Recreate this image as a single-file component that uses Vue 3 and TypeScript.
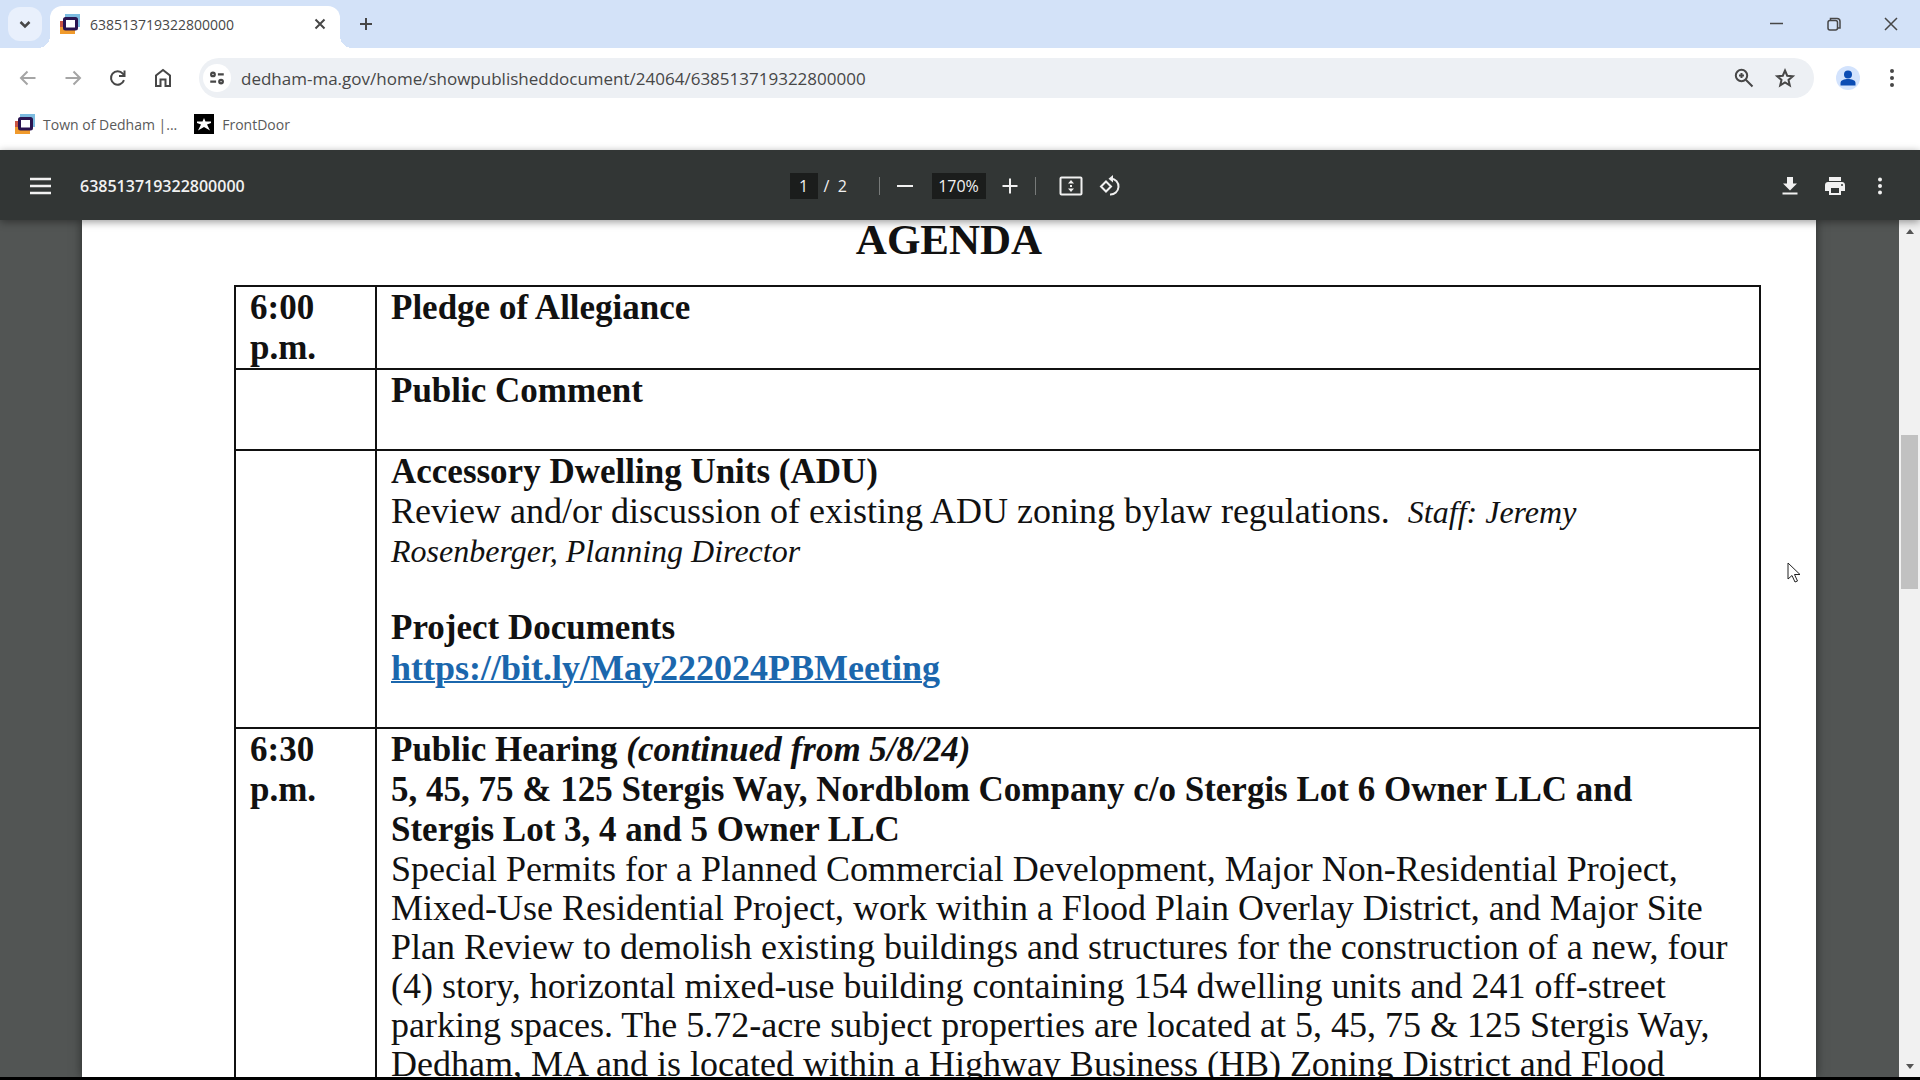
<script setup lang="ts">
import { ref } from 'vue'

const documentId = '638513719322800000'
const address = ref(`dedham-ma.gov/home/showpublisheddocument/24064/${documentId}`)
const pageNumber = ref('1')
const zoomLevel = ref('170%')
</script>

<template>
  <div class="browser">
    <header class="tab-strip">
      <button class="tab-search" aria-label="Search tabs">
        <svg width="24" height="24" viewBox="0 0 24 24"><path d="M7.500 10l4.500 4.500 4.500-4.500" class="line bold" /></svg>
      </button>
      <div class="tab">
        <svg class="favicon" width="20" height="20" viewBox="0 0 20 20">
          <path d="M5 0h15v13H5z" fill="#7cbbe0" />
          <path d="M0 8h15v12H0z" fill="#f09a2c" />
          <path d="M0 7h5v6H0z" fill="#c95343" />
          <rect x="4.500" y="4.500" width="12" height="10.500" rx="1" fill="#fff" stroke="#2a1450" stroke-width="3" />
        </svg>
        <span class="tab-title">{{ documentId }}</span>
        <button class="icon-button" aria-label="Close tab">
          <svg width="20" height="20" viewBox="0 0 20 20"><path d="M5.500 5.500l9 9M14.500 5.500l-9 9" class="line" /></svg>
        </button>
      </div>
      <button class="icon-button new-tab" aria-label="New tab">
        <svg width="20" height="20" viewBox="0 0 20 20"><path d="M10 4v12M4 10h12" class="line" /></svg>
      </button>
      <div class="window-controls">
        <button class="icon-button" aria-label="Minimize">
          <svg width="20" height="20" viewBox="0 0 20 20"><path d="M3 9.500h13" class="line thin" /></svg>
        </button>
        <button class="icon-button" aria-label="Restore">
          <svg width="20" height="20" viewBox="0 0 20 20">
            <rect x="4" y="6.500" width="9.500" height="9.500" rx="2" class="line thin" />
            <path d="M6.500 6V4.500h6.500a3 3 0 0 1 3 3v6.500h-2" class="line thin" />
          </svg>
        </button>
        <button class="icon-button" aria-label="Close window">
          <svg width="20" height="20" viewBox="0 0 20 20"><path d="M4 4l12 12M16 4L4 16" class="line thin" /></svg>
        </button>
      </div>
    </header>

    <div class="toolbar">
      <nav class="nav-buttons" aria-label="Navigation">
        <button class="icon-button faded" aria-label="Back">
          <svg width="24" height="24" viewBox="0 0 24 24"><path d="M19.500 12H5M11.500 5.500L5 12l6.500 6.500" class="line" /></svg>
        </button>
        <button class="icon-button faded" aria-label="Forward">
          <svg width="24" height="24" viewBox="0 0 24 24"><path d="M4.500 12H19M12.500 5.500L19 12l-6.500 6.500" class="line" /></svg>
        </button>
        <button class="icon-button" aria-label="Reload">
          <svg width="24" height="24" viewBox="0 0 24 24">
            <path d="M18 14.200A6.700 6.700 0 1 1 16.800 7.600L18 9" class="line" />
            <path d="M18.500 4.500v5.500h-5.500" class="line" />
          </svg>
        </button>
        <button class="icon-button" aria-label="Home">
          <svg width="24" height="24" viewBox="0 0 24 24"><path d="M5 20V9.500l7-5.500 7 5.500V20h-4.500v-6.500h-5V20z" class="line" /></svg>
        </button>
      </nav>
      <div class="address-bar">
        <button class="site-info" aria-label="View site information">
          <svg width="18" height="18" viewBox="0 0 20 20">
            <circle cx="5.500" cy="6" r="2" class="line bold" />
            <path d="M11 6h6.500M2.500 14H9" class="line bold" />
            <circle cx="14.500" cy="14" r="2" class="line bold" />
          </svg>
        </button>
        <input v-model="address" class="url" type="text" aria-label="Address" spellcheck="false" />
        <button class="icon-button" aria-label="Zoom">
          <svg width="24" height="24" viewBox="0 0 24 24">
            <circle cx="9.500" cy="9.500" r="5.700" class="line" />
            <path d="M13.800 13.800l6.700 6.700M9.500 7v5M7 9.500h5" class="line" />
          </svg>
        </button>
        <button class="icon-button" aria-label="Bookmark this tab">
          <svg width="24" height="24" viewBox="0 0 24 24">
            <path d="M12 4.500l2.200 5.200 5.600.500-4.300 3.700 1.300 5.500-4.800-2.900-4.800 2.900 1.300-5.500-4.300-3.700 5.600-.500z" class="line" />
          </svg>
        </button>
      </div>
      <button class="profile" aria-label="Profile">
        <svg width="24" height="24" viewBox="0 0 24 24">
          <circle cx="12" cy="12" r="12" fill="#d3e3fd" />
          <circle cx="12" cy="8.500" r="4" fill="#0b4cb4" />
          <path d="M4.500 19.500v-2.500c0-3 4-4 7.500-4s7.500 1 7.500 4v2.500z" fill="#0b4cb4" />
        </svg>
      </button>
      <button class="icon-button" aria-label="Browser menu">
        <svg width="24" height="24" viewBox="0 0 24 24" fill="#474747">
          <circle cx="12" cy="5" r="2" /><circle cx="12" cy="12" r="2" /><circle cx="12" cy="19" r="2" />
        </svg>
      </button>
    </div>

    <nav class="bookmarks" aria-label="Bookmarks">
      <a href="#">
        <svg width="20" height="20" viewBox="0 0 20 20">
          <path d="M5 0h15v13H5z" fill="#7cbbe0" />
          <path d="M0 8h15v12H0z" fill="#f09a2c" />
          <path d="M0 7h5v6H0z" fill="#c95343" />
          <rect x="4.500" y="4.500" width="12" height="10.500" rx="1" fill="#fff" stroke="#2a1450" stroke-width="3" />
        </svg>
        Town of Dedham |...
      </a>
      <a href="#">
        <svg width="20" height="20" viewBox="0 0 20 20">
          <path d="M0 0h20v20H0z" />
          <path d="M10 4l1.500 3.500h5.500v1.500l-4 1.500 3 6-6-3.500-6 3.500 3-6-4-1.500V7.500h5.500z" fill="#fff" />
        </svg>
        FrontDoor
      </a>
    </nav>

    <div class="pdf-toolbar">
      <div class="pdf-start">
        <button class="icon-button" aria-label="Menu">
          <svg width="22" height="20" viewBox="0 0 22 20"><path d="M1 3h21M1 10h21M1 17h21" class="line bold" /></svg>
        </button>
        <span class="pdf-title">{{ documentId }}</span>
      </div>
      <div class="pdf-center">
        <input v-model="pageNumber" class="page-input" type="text" aria-label="Page number" />
        <span class="page-count">/&nbsp; 2</span>
        <i class="divider"></i>
        <button class="icon-button" aria-label="Zoom out">
          <svg width="24" height="24" viewBox="0 0 24 24"><path d="M4 12h16" class="line" /></svg>
        </button>
        <input v-model="zoomLevel" class="zoom-input" type="text" aria-label="Zoom level" />
        <button class="icon-button" aria-label="Zoom in">
          <svg width="24" height="24" viewBox="0 0 24 24"><path d="M12 4.500v15M4.500 12h15" class="line" /></svg>
        </button>
        <i class="divider"></i>
        <button class="icon-button fit" aria-label="Fit to page">
          <svg width="24" height="24" viewBox="0 0 24 24" fill="currentColor">
            <rect x="1.500" y="3.500" width="21" height="17" rx="1" class="line" />
            <path d="M12 6l3 3.500H9zM12 18l3-3.500H9zM11 11h2v2h-2z" />
          </svg>
        </button>
        <button class="icon-button" aria-label="Rotate counterclockwise">
          <svg width="24" height="24" viewBox="0 0 24 24">
            <path d="M7 7.500l5 5-5 5-5-5z" class="line" />
            <path d="M12 4.500a8 8 0 1 1-1 16" class="line" />
            <path d="M14 1v7.500L9.500 4.700z" fill="currentColor" />
          </svg>
        </button>
      </div>
      <div class="pdf-end">
        <button class="icon-button" aria-label="Download">
          <svg width="24" height="24" viewBox="0 0 24 24" fill="currentColor"><path d="M19 9.500h-4V3H9v6.500H5l7 7zM4.500 18.500v2h15v-2z" /></svg>
        </button>
        <button class="icon-button" aria-label="Print">
          <svg width="24" height="24" viewBox="0 0 24 24" fill="currentColor">
            <path d="M19 8H5c-1.700 0-3 1.300-3 3v6h4v4h12v-4h4v-6c0-1.700-1.300-3-3-3zm-3 11H8v-5h8zm3-7a1 1 0 1 1 0-2 1 1 0 0 1 0 2zM18 3H6v4h12z" />
          </svg>
        </button>
        <button class="icon-button" aria-label="More actions">
          <svg width="24" height="24" viewBox="0 0 24 24" fill="currentColor">
            <circle cx="12" cy="5.500" r="2" /><circle cx="12" cy="12" r="2" /><circle cx="12" cy="18.500" r="2" />
          </svg>
        </button>
      </div>
    </div>

    <main class="viewer">
      <article class="page">
        <h1>AGENDA</h1>
        <table>
          <tbody>
            <tr>
              <th scope="row">6:00<br />p.m.</th>
              <td><h2>Pledge of Allegiance</h2></td>
            </tr>
            <tr class="tall">
              <th scope="row"></th>
              <td><h2>Public Comment</h2></td>
            </tr>
            <tr>
              <th scope="row"></th>
              <td>
                <h2>Accessory Dwelling Units (ADU)</h2>
                <p class="spaced">
                  Review and/or discussion of existing ADU zoning bylaw regulations.&nbsp; <em>Staff: Jeremy<br />
                  Rosenberger, Planning Director</em>
                </p>
                <h2>Project Documents</h2>
                <h2 class="spaced"><a href="https://bit.ly/May222024PBMeeting">https://bit.ly/May222024PBMeeting</a></h2>
              </td>
            </tr>
            <tr>
              <th scope="row">6:30<br />p.m.</th>
              <td>
                <h2>
                  Public Hearing <em>(continued from 5/8/24)</em><br />
                  5, 45, 75 &amp; 125 Stergis Way, Nordblom Company c/o Stergis Lot 6 Owner LLC and<br />
                  Stergis Lot 3, 4 and 5 Owner LLC
                </h2>
                <p>
                  Special Permits for a Planned Commercial Development, Major Non-Residential Project,<br />
                  Mixed-Use Residential Project, work within a Flood Plain Overlay District, and Major Site<br />
                  Plan Review to demolish existing buildings and structures for the construction of a new, four<br />
                  (4) story, horizontal mixed-use building containing 154 dwelling units and 241 off-street<br />
                  parking spaces. The 5.72-acre subject properties are located at 5, 45, 75 &amp; 125 Stergis Way,<br />
                  Dedham, MA and is located within a Highway Business (HB) Zoning District and Flood
                </p>
              </td>
            </tr>
          </tbody>
        </table>
        <svg class="pointer" width="14" height="22" viewBox="0 0 14 22">
          <path d="M1 1v16l4-3.500 3 6.500 2.500-1-3-6.500H13z" fill="#fff" stroke="#222" />
        </svg>
      </article>
      <div class="scrollbar">
        <svg width="20" height="20" viewBox="0 0 20 20"><path d="M6 14l4-5 4 5z" fill="#555" /></svg>
        <i class="before"></i>
        <i class="thumb"></i>
        <i class="after"></i>
        <svg width="20" height="20" viewBox="0 0 20 20"><path d="M6 7l4 5 4-5z" fill="#555" /></svg>
      </div>
    </main>
  </div>
</template>

<style>
body {
  margin: 0;
}
</style>

<style scoped>
* {
  box-sizing: border-box;
}

.browser {
  display: flex;
  flex-direction: column;
  height: 100vh;
  overflow: hidden;
  border-bottom: 3px solid #000;
  background: #fff;
  font-family: "Open Sans", "Noto Sans", sans-serif;
  color: #474747;
}

button {
  display: grid;
  place-items: center;
  flex: none;
  padding: 0;
  border: 0;
  background: none;
  color: inherit;
}

svg {
  display: block;
  flex: none;
}

.icon-button {
  width: 24px;
  height: 24px;
}

.faded {
  color: #a5a5a5;
}

.line {
  fill: none;
  stroke: currentColor;
  stroke-width: 2;
}

.line.bold {
  stroke-width: 2.5;
}

.line.thin {
  stroke-width: 1.5;
}

/* Tab strip */
.tab-strip {
  display: flex;
  align-items: center;
  flex: none;
  height: 48px;
  padding: 0 17px 0 8px;
  background: #d3e2f8;
}

.tab-search {
  width: 34px;
  height: 34px;
  border-radius: 12px;
  background: #e9f0fc;
}

.tab {
  position: relative;
  display: flex;
  align-items: center;
  align-self: flex-end;
  width: 290px;
  height: 42px;
  margin-left: 8px;
  padding: 0 8px 6px 10px;
  border-radius: 12px 12px 0 0;
  background: #fff;
}

.tab::before,
.tab::after {
  content: "";
  position: absolute;
  bottom: 0;
  width: 12px;
  height: 12px;
}

.tab::before {
  right: 100%;
  background: radial-gradient(circle at 0 0, transparent 12px, #fff 12px);
}

.tab::after {
  left: 100%;
  background: radial-gradient(circle at 100% 0, transparent 12px, #fff 12px);
}

.tab-title {
  flex: 1;
  margin-left: 10px;
  font-size: 14px;
}

.new-tab {
  margin-left: 14px;
}

.window-controls {
  display: flex;
  gap: 33px;
  margin-left: auto;
}

/* Navigation toolbar */
.toolbar {
  display: flex;
  align-items: center;
  flex: none;
  height: 60px;
  padding: 0 16px;
}

.nav-buttons {
  display: flex;
  gap: 21px;
}

.address-bar {
  display: flex;
  align-items: center;
  flex: 1;
  gap: 17px;
  height: 40px;
  margin: 0 22px 0 24px;
  padding: 0 17px 0 4px;
  border-radius: 20px;
  background: #edf0f4;
}

.site-info {
  width: 28px;
  height: 28px;
  border-radius: 14px;
  background: #fff;
}

input {
  min-width: 0;
  padding: 0;
  border: 0;
  outline: 0;
  background: none;
  color: inherit;
  font-family: inherit;
}

.url {
  flex: 1;
  margin-left: -7px;
  height: 28px;
  font-size: 17px;
}

.profile {
  margin-right: 20px;
}

/* Bookmarks bar */
.bookmarks {
  display: flex;
  align-items: center;
  flex: none;
  gap: 17px;
  height: 42px;
  padding: 0 15px 10px;
}

.bookmarks a {
  display: flex;
  align-items: center;
  gap: 8px;
  color: #5a5a5a;
  font-size: 14px;
  text-decoration: none;
}

/* Document toolbar */
.pdf-toolbar {
  position: relative;
  z-index: 1;
  display: flex;
  align-items: center;
  flex: none;
  height: 70px;
  padding: 2px 28px 0;
  background: #323635;
  box-shadow: 0 2px 8px rgba(0, 0, 0, 0.4);
  color: #f1f1f1;
}

.pdf-start,
.pdf-end {
  display: flex;
  align-items: center;
  flex: 1;
}

.pdf-start {
  gap: 28px;
}

.pdf-end {
  justify-content: flex-end;
  gap: 21px;
}

.pdf-title {
  font-size: 16px;
  font-weight: 600;
}

.pdf-center {
  display: flex;
  align-items: center;
  margin-right: 8px;
}

.page-input,
.zoom-input {
  height: 26px;
  background: #1b1d1c;
  font-size: 16px;
  text-align: center;
}

.page-input {
  width: 28px;
}

.zoom-input {
  width: 54px;
  margin: 0 12px 0 15px;
}

.page-count {
  width: 32px;
  margin: 0 17px 0 6px;
  font-size: 16px;
}

.divider {
  width: 1px;
  height: 18px;
  margin: 0 13px;
  background: #777a79;
}

.page-count + .divider {
  margin-left: 6px;
}

.fit {
  margin: 0 16px 0 10px;
}

/* Document */
.viewer {
  display: flex;
  flex: 1;
  min-height: 0;
  overflow: hidden;
  background: #525554;
}

.page {
  position: relative;
  flex: 1;
  margin: 0 83px 0 82px;
  padding: 0 55px 0 152px;
  background: #fff;
  box-shadow: 0 0 10px rgba(0, 0, 0, 0.5);
  color: #111;
  font-family: "Liberation Serif", serif;
  font-size: 36px;
  line-height: 39px;
  white-space: nowrap;
}

h1 {
  margin: 0 -55px 25px -152px;
  font-size: 43px;
  line-height: 40px;
  text-align: center;
}

table {
  width: 100%;
  border-collapse: collapse;
  table-layout: fixed;
}

th,
td {
  padding: 1px 14px 0;
  border: 2px solid #111;
  text-align: left;
  vertical-align: top;
}

th {
  width: 141px;
}

th,
h2 {
  font-size: 35px;
  line-height: 40px;
}

.tall {
  height: 81px;
}

h2,
p {
  margin: 0;
}

p em {
  font-size: 32px;
  line-height: 32px;
}

.spaced {
  margin-bottom: 38px;
}

td a {
  color: #1b67ad;
  font-size: 36px;
  text-decoration-thickness: 2px;
}

.pointer {
  position: absolute;
  top: 342px;
  right: 15px;
}

.scrollbar {
  display: flex;
  flex-direction: column;
  align-items: center;
  flex: none;
  width: 21px;
  background: #f1f1f1;
}

.before {
  flex: 195;
}

.thumb {
  flex: 154;
  width: 17px;
  background: #c1c1c1;
}

.after {
  flex: 468;
}
</style>
